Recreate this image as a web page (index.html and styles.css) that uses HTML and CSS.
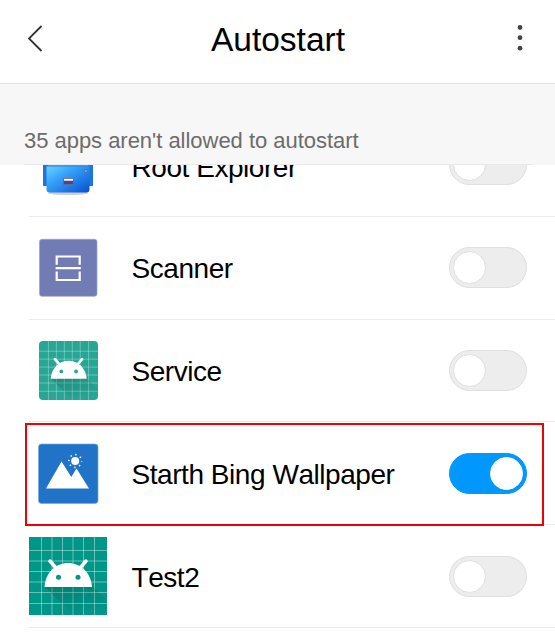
FILE: index.html
```html
<!DOCTYPE html>
<html lang="en">
<head>
<meta charset="utf-8">
<title>Autostart</title>
<link rel="stylesheet" href="styles.css">
</head>
<body>
<svg class="defs" width="0" height="0">
  <defs><linearGradient id="shade" x1="0" y1="0" x2=".6" y2="1"><stop offset="0" stop-color="#004d40" stop-opacity=".3"/><stop offset="1" stop-color="#004d40" stop-opacity="0"/></linearGradient></defs>
  <symbol id="android" viewBox="0 0 78 78">
    <path d="M0 0H78V78H0Z" fill="currentColor"/>
    <path d="M12.500 0V78M23 0V78M33.500 0V78M44 0V78M54.500 0V78M65.500 0V78M0 13.500H78M0 24H78M0 34.500H78M0 45H78M0 55.500H78M0 66.500H78" stroke="#fff" stroke-opacity=".4" stroke-width="1" fill="none"/>
    <path d="M16 50L44 78H78V64L63 49Z" fill="url(#shade)"/>
    <path d="M15.500 50C16.500 35 27 26 39 26S62 35 63 50Z" fill="#fff"/>
    <path d="M21 24L27 31M57 24L51 31" stroke="#fff" stroke-width="3.500" stroke-linecap="round"/>
    <circle cx="29.500" cy="40.300" r="2.500" fill="currentColor"/>
    <circle cx="49" cy="40.300" r="2.500" fill="currentColor"/>
  </symbol>
</svg>
<header class="bar">
  <svg class="back" width="18" height="30" viewBox="0 0 18 30"><path d="M14.500 3L2 15.500L14.500 28" fill="none" stroke="#333" stroke-width="1.800"/></svg>
  <h1 class="title">Autostart</h1>
  <svg class="more" width="6" height="28" viewBox="0 0 6 28" fill="#444"><circle cx="3" cy="3.500" r="2.400"/><circle cx="3" cy="13.700" r="2.400"/><circle cx="3" cy="24.200" r="2.400"/></svg>
</header>
<div class="section"><span class="summary">35 apps aren't allowed to autostart</span></div>
<main class="viewport">
  <ul class="list">
    <li class="row">
      <svg class="icon" viewBox="0 0 78 78">
        <defs><linearGradient id="blue" x1="0" y1="0" x2="1" y2="1"><stop offset="0" stop-color="#73d4ff"/><stop offset=".35" stop-color="#38a4fa"/><stop offset="1" stop-color="#064fd2"/></linearGradient></defs>
        <ellipse cx="39" cy="67" rx="20" ry="2" fill="#bbb" opacity=".7"/>
        <path d="M14 20H64V60H14Z" fill="#1d75df"/>
        <path d="M19 30H59V39.500H19Z" fill="#b8e4ff"/>
        <path d="M17.500 40H60.500V63Q60.500 66.500 57.500 66.500H20.500Q17.500 66.500 17.500 63Z" fill="url(#blue)"/>
        <path d="M17.500 40H60.500" stroke="#1b83ef"/>
        <path d="M34.500 52.500H44.500V58.500H34.500Z" fill="#4d4394" stroke="#626a9b"/>
        <path d="M35 53.800H44" stroke="#fff" stroke-width="1.800"/>
        <circle cx="56.800" cy="45" r="1.600" fill="#8ba7bd" stroke="#42658c" stroke-width=".7"/>
      </svg>
      <span class="name name-low">Root Explorer</span><span class="switch"></span>
    </li>
    <li class="row">
      <svg class="icon" viewBox="0 0 78 78">
        <rect x="10.500" y="10.300" width="57.500" height="57" rx="2.500" fill="#717cb4" stroke="#9ba3cb" stroke-width=".7"/>
        <path d="M27.700 35.700V27.500H50.700V35.700M27.700 42.500V51H50.700V42.500M26.600 39.100H51.800" fill="none" stroke="#fff" stroke-width="2.200"/>
      </svg>
      <span class="name">Scanner</span><span class="switch"></span>
    </li>
    <li class="row">
      <svg class="icon icon-soft"><use href="#android"/></svg>
      <span class="name">Service</span><span class="switch"></span>
    </li>
    <li class="row picked">
      <svg class="icon" viewBox="0 0 78 78">
        <rect x="9.500" y="10" width="59.500" height="59.500" rx="3" fill="#2173c8" stroke="#77a9dc" stroke-width=".7"/>
        <path d="M17 54.500L32.500 27.500L42.300 43L47.500 34.500L60 54.500Z" fill="#fff"/>
        <circle cx="46.200" cy="27" r="4" fill="#fff"/>
        <circle cx="46.200" cy="27" r="6.400" fill="none" stroke="#fff" stroke-width="1.600" stroke-dasharray="1.300 3.727" stroke-dashoffset=".65"/>
      </svg>
      <span class="name">Starth Bing Wallpaper</span><span class="switch on"></span>
    </li>
    <li class="row">
      <svg class="icon icon-full"><use href="#android"/></svg>
      <span class="name">Test2</span><span class="switch"></span>
    </li>
    <li class="row"></li>
  </ul>
</main>
</body>
</html>
```
FILE: styles.css
```css
*, *::before, *::after { box-sizing: border-box; }
body {
  margin: 0;
  height: 642px;
  overflow: hidden;
  background: #fff;
  color: #000;
  font-family: "Liberation Sans", Arial, sans-serif;
  font-kerning: none;
}
.defs { display: block; }
.bar {
  display: flex;
  align-items: center;
  justify-content: space-between;
  height: 84px;
  padding: 0 32px 7px 27px;
  border-bottom: 1px solid #e3e3e3;
}
.title {
  margin: 0 6px 0 0;
  padding-top: 4px;
  font-size: 33.5px;
  line-height: 40px;
  font-weight: 400;
}
.section {
  display: flex;
  align-items: flex-end;
  height: 81px;
  padding: 0 0 11px 24px;
  background: linear-gradient(#e9e9e9, #e9e9e9) 24px 100% / 508px 1px no-repeat #f7f7f7;
}
.summary {
  font-size: 22px;
  line-height: 26px;
  letter-spacing: -.03px;
  color: #6c6c6c;
}
.viewport { height: 477px; overflow: hidden; }
.list {
  margin: -51px 0 0 29px;
  padding: 0;
  list-style: none;
}
.row {
  display: flex;
  align-items: center;
  height: 102.8px;
  padding-right: 28px;
  border-bottom: 1px solid #e9e9e9;
}
.icon { width: 78px; height: 78px; flex: none; }
.icon-soft {
  width: 59px;
  height: 59px;
  margin: 0 9px 0 10px;
  border-radius: 4px;
  color: #27a696;
}
.icon-full { color: #009688; }
.name {
  flex: 1;
  margin-left: 24.5px;
  padding-top: 3px;
  font-size: 28px;
  line-height: 34px;
  letter-spacing: -.45px;
  white-space: nowrap;
}
.name-low { padding-top: 6px; }
.switch {
  display: flex;
  align-items: center;
  width: 78px;
  height: 41px;
  padding: 0 3px;
  border: 1px solid #dfdfdf;
  border-radius: 21px;
  background: #ededed;
}
.switch::before {
  content: "";
  width: 33px;
  height: 33px;
  border: 1px solid #dfdfdf;
  border-radius: 50%;
  background: #fff;
}
.switch.on {
  justify-content: flex-end;
  border-color: #0597fb;
  background: #0098ff;
}
.switch.on::before { border-color: #fff; }
.picked { position: relative; }
.picked::after {
  content: "";
  position: absolute;
  inset: 1px 11px -2px -4px;
  border: 2px solid #f00000;
}
```
